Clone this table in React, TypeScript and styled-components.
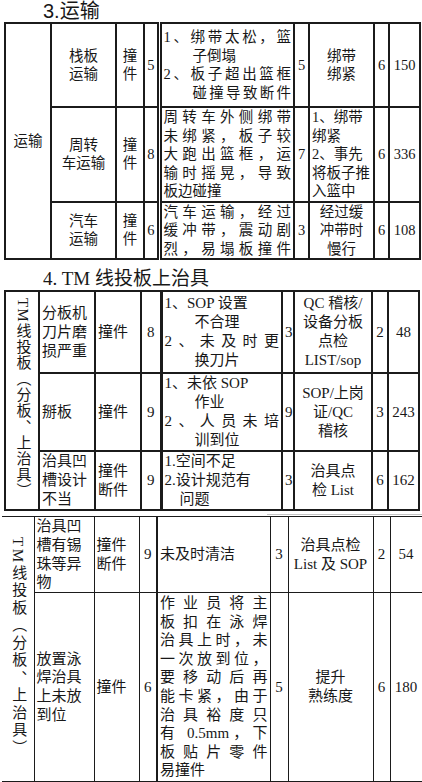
import React from 'react';
import styled, { createGlobalStyle } from 'styled-components';

// line markup: leading "^" = 2em hanging indent, leading "~" = 1em, trailing "=" = stretch to cell width
type CellData = { lines: string[]; align: 'left' | 'center' };
type RowData = { h: number; cells: CellData[] };
type SheetData = {
  widths: number[];
  border: number;
  size: number;
  lead: number;
  sep: string;
  noLeft?: boolean;
  category: string;
  vertical: boolean;
  spacing: number;
  rows: RowData[];
};

const c = (lines: string[], align: 'left' | 'center' = 'center'): CellData => ({ lines, align });

const T1: SheetData = {
  widths: [46, 65, 28, 15, 135, 15, 65, 15, 31],
  border: 2,
  size: 14.5,
  lead: 18.5,
  sep: '5px double #1b1b1b',
  category: '运输',
  vertical: false,
  spacing: 0,
  rows: [
    {
      h: 84,
      cells: [
        c(['栈板', '运输']), c(['撞', '件']), c(['5']),
        c(['1、绑带太松，篮=', '^子倒塌', '2、板子超出篮框=', '^碰撞导致断件='], 'left'),
        c(['5']), c(['绑带', '绑紧']), c(['6']), c(['150']),
      ],
    },
    {
      h: 94,
      cells: [
        c(['周转', '车运输']), c(['撞', '件']), c(['8']),
        c(['周转车外侧绑带=', '未绑紧，板子较=', '大跑出篮框，运=', '输时摇晃，导致=', '板边碰撞'], 'left'),
        c(['7']), c(['1、绑带', '绑紧', '2、事先', '将板子推', '入篮中'], 'left'), c(['6']), c(['336']),
      ],
    },
    {
      h: 54,
      cells: [
        c(['汽车', '运输']), c(['撞', '件']), c(['6']),
        c(['汽车运输，经过=', '缓冲带，震动剧=', '烈，易塌板撞件='], 'left'),
        c(['3']), c(['经过缓', '冲带时', '慢行']), c(['6']), c(['108']),
      ],
    },
  ],
};

const T2: SheetData = {
  widths: [34, 56, 46, 20, 121, 12, 78, 16, 31],
  border: 2,
  size: 15,
  lead: 19,
  sep: '3px solid #1b1b1b',
  category: 'TM线投板（分板、上治具）',
  vertical: true,
  spacing: 1,
  rows: [
    {
      h: 82,
      cells: [
        c(['分板机', '刀片磨', '损严重'], 'left'), c(['撞件'], 'left'), c(['8']),
        c(['1、SOP 设置', '^不合理', '2、未及时更=', '^换刀片'], 'left'),
        c(['3']), c(['QC 稽核/', '设备分板', '点检', 'LIST/sop']), c(['2']), c(['48']),
      ],
    },
    {
      h: 77,
      cells: [
        c(['掰板'], 'left'), c(['撞件'], 'left'), c(['9']),
        c(['1、未依 SOP', '^作业', '2、人员未培=', '^训到位'], 'left'),
        c(['9']), c(['SOP/上岗', '证/QC', '稽核']), c(['3']), c(['243']),
      ],
    },
    {
      h: 54,
      cells: [
        c(['治具凹', '槽设计', '不当'], 'left'), c(['撞件', '断件'], 'left'), c(['9']),
        c(['1.空间不足', '2.设计规范有', '~问题'], 'left'),
        c(['3']), c(['治具点', '检 List']), c(['6']), c(['162']),
      ],
    },
  ],
};

const T3: SheetData = {
  widths: [32, 60, 45, 18, 113, 18, 85, 17, 32],
  border: 1.5,
  size: 15,
  lead: 18.6,
  sep: '2px solid #1b1b1b',
  noLeft: true,
  category: 'TM线投板（分板、上治具）',
  vertical: true,
  spacing: 2.5,
  rows: [
    {
      h: 76,
      cells: [
        c(['治具凹', '槽有锡', '珠等异', '物'], 'left'), c(['撞件', '断件'], 'left'), c(['9']),
        c(['未及时清洁'], 'left'),
        c(['3']), c(['治具点检', 'List 及 SOP']), c(['2']), c(['54']),
      ],
    },
    {
      h: 189,
      cells: [
        c(['放置泳', '焊治具', '上未放', '到位'], 'left'), c(['撞件'], 'left'), c(['6']),
        c([
          '作业员将主=', '板扣在泳焊=', '治具上时，未=', '一次放到位，=', '要移动后再=',
          '能卡紧，由于=', '治具裕度只=', '有 0.5mm，下=', '板贴片零件=', '易撞件',
        ], 'left'),
        c(['5']), c(['提升', '熟练度']), c(['6']), c(['180']),
      ],
    },
  ],
};

const parseLine = (raw: string) => {
  let text = raw;
  let indent = 0;
  if (text.startsWith('^')) { indent = 2; text = text.slice(1); }
  else if (text.startsWith('~')) { indent = 1; text = text.slice(1); }
  const spread = text.endsWith('=');
  if (spread) text = text.slice(0, -1);
  return { text, indent, spread };
};

const Sheet = ({ data }: { data: SheetData }) => {
  const total = data.widths.reduce((a, b) => a + b, 0);
  return (
    <Table $w={total} $border={data.border} $size={data.size} $lead={data.lead} $noLeft={data.noLeft}>
      <colgroup>
        {data.widths.map((w, i) => <Col key={i} $w={w} />)}
      </colgroup>
      <tbody>
        {data.rows.map((row, r) => (
          <Row key={r} $h={row.h}>
            {r === 0 && (
              <Category rowSpan={data.rows.length} $border={data.border}>
                {data.vertical ? <Vertical $spacing={data.spacing}>{data.category}</Vertical> : data.category}
              </Category>
            )}
            {row.cells.map((cell, i) => (
              <Cell key={i} $align={cell.align} $border={data.border} $sep={i === 3 ? data.sep : undefined}>
                {cell.lines.map((raw, k) => {
                  const { text, indent, spread } = parseLine(raw);
                  return <Line key={k} $indent={indent} $spread={spread}>{text}</Line>;
                })}
              </Cell>
            ))}
          </Row>
        ))}
      </tbody>
    </Table>
  );
};

const App = () => (
  <Page>
    <GlobalStyle />
    <HeadingOne>3.运输</HeadingOne>
    <Sheet data={T1} />
    <HeadingTwo>4. TM 线投板上治具</HeadingTwo>
    <Sheet data={T2} />
    <ScanEdge />
    <LastSheet>
      <Sheet data={T3} />
    </LastSheet>
  </Page>
);

export default App;

// ========== Styled Components ==========

const GlobalStyle = createGlobalStyle`
  html, body {
    margin: 0;
    padding: 0;
    background: #fff;
  }
  body {
    font-family: "Liberation Serif", "Noto Sans CJK SC", serif;
    color: #181818;
  }
`;

const Page = styled.div`
  width: 422px;
  height: 782px;
  overflow: hidden;
  display: flex;
  flex-direction: column;
  align-items: flex-start;
`;

const HeadingOne = styled.div`
  margin: 0 0 0 43px;
  height: 23px;
  font-family: "Liberation Sans", "Noto Sans CJK SC", sans-serif;
  font-size: 20px;
  line-height: 22px;
`;

const HeadingTwo = styled.div`
  margin: 8px 0 0 43px;
  height: 24px;
  font-family: "Liberation Serif", "Noto Sans CJK SC", serif;
  font-size: 19px;
  line-height: 22px;
`;

const ScanEdge = styled.div`
  margin: 3px 0 0 267px;
  width: 155px;
  height: 2px;
  background: #c4c4c4;
`;

const LastSheet = styled.div`
  margin-top: 1px;
  margin-left: -2px;
`;

const Table = styled.table<{ $w: number; $border: number; $size: number; $lead: number; $noLeft?: boolean }>`
  width: ${p => p.$w}px;
  margin-left: 4px;
  border-collapse: collapse;
  table-layout: fixed;
  border: ${p => p.$border}px solid #1b1b1b;
  ${p => p.$noLeft && 'border-left-style: hidden;'}
  font-size: ${p => p.$size}px;
  line-height: ${p => p.$lead}px;
`;

const Col = styled.col<{ $w: number }>`
  width: ${p => p.$w}px;
`;

const Row = styled.tr<{ $h: number }>`
  height: ${p => p.$h}px;
`;

const Cell = styled.td<{ $align: string; $border: number; $sep?: string }>`
  border: ${p => p.$border}px solid #1b1b1b;
  ${p => p.$sep && `border-left: ${p.$sep};`}
  padding: 0 2px;
  vertical-align: middle;
  text-align: ${p => p.$align};
  overflow: hidden;
`;

const Category = styled.td<{ $border: number }>`
  border: ${p => p.$border}px solid #1b1b1b;
  padding: 0;
  text-align: center;
  vertical-align: middle;
`;

const Vertical = styled.div<{ $spacing: number }>`
  display: inline-block;
  writing-mode: vertical-rl;
  text-orientation: mixed;
  letter-spacing: ${p => p.$spacing}px;
  line-height: 1;
  font-size: 15px;
`;

const Line = styled.div<{ $indent: number; $spread: boolean }>`
  padding-left: ${p => p.$indent}em;
  text-align-last: ${p => (p.$spread ? 'justify' : 'auto')};
`;
